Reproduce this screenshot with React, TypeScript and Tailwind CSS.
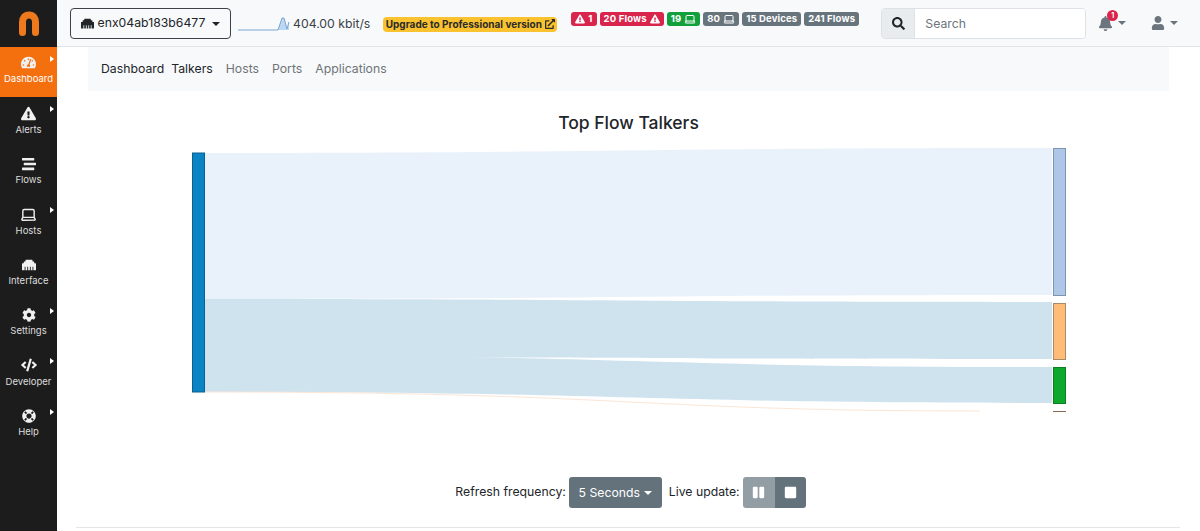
import {
  FaCode,
  FaCog,
  FaBell,
  FaEthernet,
  FaExclamationTriangle,
  FaExternalLinkAlt,
  FaLifeRing,
  FaPause,
  FaSearch,
  FaStop,
  FaStream,
  FaTachometerAlt,
  FaUser,
} from "react-icons/fa";
import { LuLaptop } from "react-icons/lu";
import type { ReactNode } from "react";

const sideItems = [
  { label: "Dashboard", icon: <FaTachometerAlt size={15} />, arrow: true, active: true },
  { label: "Alerts", icon: <FaExclamationTriangle size={15} />, arrow: true },
  { label: "Flows", icon: <FaStream size={14} /> },
  { label: "Hosts", icon: <LuLaptop size={17} strokeWidth={2} />, arrow: true },
  { label: "Interface", icon: <FaEthernet size={14} /> },
  { label: "Settings", icon: <FaCog size={14} />, arrow: true },
  { label: "Developer", icon: <FaCode size={16} />, arrow: true },
  { label: "Help", icon: <FaLifeRing size={14} />, arrow: true },
];

const Caret = ({ className = "" }: { className?: string }) => (
  <span
    className={`inline-block w-0 h-0 border-x-[4px] border-x-transparent border-t-[4px] ${className}`}
  ></span>
);

const Badge = ({ color, children }: { color: string; children: ReactNode }) => (
  <span
    className={`flex items-center gap-[3px] h-[14px] px-[4px] rounded-[3px] text-white text-[9.5px] font-bold leading-none tracking-[0.15px] ${color}`}
  >
    {children}
  </span>
);

const Sidebar = () => (
  <aside className="w-[57px] shrink-0 bg-[#1c1c1c] flex flex-col">
    <div className="h-[47px] flex items-center justify-center">
      <svg width="22" height="26" viewBox="0 0 22 26">
        <path
          d="M4.5 21.5V11C4.5 6.5 7 4 11 4S17.5 6.5 17.5 11V21.5"
          fill="none"
          stroke="#ee7a1d"
          strokeWidth="7"
          strokeLinecap="round"
        />
      </svg>
    </div>
    {sideItems.map((item) => (
      <div
        key={item.label}
        className={`relative h-[50.4px] pb-[6px] flex flex-col items-center justify-center gap-[3px] text-[#dcdcdc] ${
          item.active ? "bg-[#f4700f] text-white" : ""
        }`}
      >
        <div className="h-[17px] flex items-center text-[#f0f0f0]">{item.icon}</div>
        <span className="text-[9.5px] leading-none">{item.label}</span>
        {item.arrow && (
          <span className="absolute right-[3px] top-[9px] w-0 h-0 border-y-[3.5px] border-y-transparent border-l-[4px] border-l-white"></span>
        )}
      </div>
    ))}
  </aside>
);

const Header = () => (
  <header className="h-[47px] shrink-0 bg-[#f8f9fa] border-b border-[#e3e4e5] flex items-center pl-[13px] text-[#212529]">
    <button className="w-[161px] h-[31px] pt-[1px] border border-[#3b4147] rounded-[4px] flex items-center justify-center gap-[4px] text-[12.25px]">
      <FaEthernet size={13} />
      <span>enx04ab183b6477</span>
      <Caret className="ml-[3px] border-t-[#212529]" />
    </button>

    <svg width="52" height="16" viewBox="0 0 52 16" className="ml-[7px] mt-[1px]">
      <path d="M40 14L44 2H46L49 13L51 6V14Z" fill="#bcd7f2" />
      <path d="M0 14H40L44 2H46L49 13L51 6" fill="none" stroke="#7ba6d4" strokeWidth="1" />
    </svg>
    <span className="ml-[3px] mt-[2px] text-[12.25px] text-[#3b4147] whitespace-nowrap">404.00 kbit/s</span>

    <span className="ml-[13px] mt-[2px] h-[15px] w-[174px] rounded-[4px] bg-[#f9c22e] flex items-center justify-center gap-[3px] text-[10px] font-bold text-[#2b2b2b] whitespace-nowrap">
      Upgrade to Professional version
      <FaExternalLinkAlt size={10} />
    </span>

    <div className="ml-[14px] w-[298px] mb-[9px] flex items-center gap-[3px] whitespace-nowrap">
      <Badge color="bg-[#d9254b]">
        <FaExclamationTriangle size={10} /> 1
      </Badge>
      <Badge color="bg-[#d9254b]">
        20 Flows <FaExclamationTriangle size={10} />
      </Badge>
      <Badge color="bg-[#12a03c]">
        19 <LuLaptop size={12} />
      </Badge>
      <Badge color="bg-[#68747c]">
        80 <LuLaptop size={12} />
      </Badge>
      <Badge color="bg-[#68747c]">15 Devices</Badge>
      <Badge color="bg-[#68747c]">241 Flows</Badge>
    </div>

    <div className="ml-[12px] w-[205px] h-[31px] flex border border-[#dee2e6] rounded-[4px] overflow-hidden">
      <div className="w-[33px] bg-[#e9ecef] flex items-center justify-center text-[#212529] border-r border-[#dee2e6]">
        <FaSearch size={13} />
      </div>
      <div className="flex-1 bg-white flex items-center pl-[10px] pt-[2px] text-[12.25px] text-[#6c757d]">Search</div>
    </div>

    <div className="relative ml-[12px] flex items-center gap-[5px] text-[#6c757d]">
      <FaBell size={15} />
      <Caret className="border-t-[#6c757d]" />
      <span className="absolute left-[9px] -top-[6px] w-[11px] h-[11px] rounded-full bg-[#d9254b] text-white text-[7px] font-bold leading-[11px] text-center">
        1
      </span>
    </div>
    <div className="ml-[25px] flex items-center gap-[5px] text-[#6c757d]">
      <FaUser size={14} />
      <Caret className="border-t-[#6c757d]" />
    </div>
  </header>
);

const SubNav = () => (
  <nav className="mx-[31px] h-[44px] pt-[1px] shrink-0 bg-[#f8f9fa] flex items-center pl-[13px] text-[12.25px] text-[#6f7479]">
    <span className="text-[#212529]">Dashboard</span>
    <span className="ml-[7px] text-[#212529]">Talkers</span>
    <span className="ml-[13px]">Hosts</span>
    <span className="ml-[13px]">Ports</span>
    <span className="ml-[13px]">Applications</span>
  </nav>
);

// drawn in page coordinates minus the sidebar and the chart's top
const Sankey = () => (
  <svg width="1143" height="275" viewBox="57 143 1143 275" className="block">
    <path d="M204 153C630 153 630 148 1052 148V295C630 295 630 299 204 299Z" fill="#e9f2fa" />
    <path d="M204 299C630 299 630 302 1052 302V359C630 359 630 357 204 357Z" fill="#cfe3ef" />
    <path d="M204 355C630 355 630 367 1052 367V403C630 403 630 392 204 392Z" fill="#cfe3ef" />
    <path d="M204 392C630 392 630 411 980 411" fill="none" stroke="#fbe6d6" strokeWidth="1" />
    <rect x="192.5" y="153" width="12" height="239" fill="#0b84c6" stroke="#0c5f8f" />
    <rect x="1053.5" y="148.5" width="12" height="147" fill="#aec7e8" stroke="#7f93ab" />
    <rect x="1053.5" y="303.5" width="12" height="56" fill="#ffbb78" stroke="#a98a68" />
    <rect x="1053.5" y="367.5" width="12" height="36" fill="#0ea82c" stroke="#0b7d22" />
    <rect x="1053" y="411" width="13" height="1" fill="#8a6a52" />
  </svg>
);

const Controls = () => (
  <div className="mt-[59px] ml-[4px] flex items-center justify-center gap-[3px] text-[12.25px] text-[#212529]">
    <span>Refresh frequency:</span>
    <button className="w-[93px] h-[31px] pt-[1px] bg-[#64727b] rounded-[3px] text-white flex items-center justify-center gap-[4px]">
      5 Seconds
      <Caret className="border-t-white" />
    </button>
    <span className="ml-[4px]">Live update:</span>
    <div className="flex h-[31px] rounded-[3px] overflow-hidden text-white">
      <div className="w-[32px] bg-[#939da4] flex items-center justify-center">
        <FaPause size={13} />
      </div>
      <div className="w-[31px] bg-[#64727b] flex items-center justify-center">
        <FaStop size={13} />
      </div>
    </div>
  </div>
);

export default function App() {
  return (
    <div
      className="w-[1200px] h-[531px] overflow-hidden flex bg-white"
      style={{ fontFamily: "Inter, 'Liberation Sans', sans-serif" }}
    >
      <Sidebar />
      <div className="flex-1 min-w-0 flex flex-col">
        <Header />
        <SubNav />
        <h1 className="mt-[19px] h-[25px] text-center text-[17.5px] leading-[25px] font-medium text-[#212529]">
          Top Flow Talkers
        </h1>
        <div className="mt-[8px]">
          <Sankey />
        </div>
        <Controls />
        <hr className="mt-[19px] ml-[19px] mr-[20px] border-[#e5e5e5]" />
      </div>
    </div>
  );
}
